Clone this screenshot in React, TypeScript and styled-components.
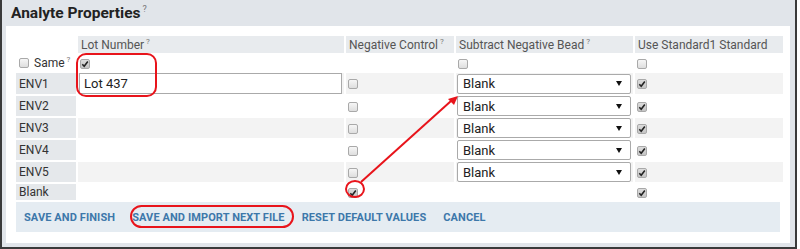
import styled, { createGlobalStyle } from 'styled-components';

const GlobalStyle = createGlobalStyle`
  html, body {
    margin: 0;
    padding: 0;
    background: #fff;
  }
  body {
    font-family: Roboto, "Liberation Sans", Arial, sans-serif;
    font-size: 12px;
    color: #333;
  }
`;

const analytes = ['ENV1', 'ENV2', 'ENV3', 'ENV4', 'ENV5'];

const Frame = styled.div`
  position: relative;
  width: 797px;
  height: 249px;
  box-sizing: border-box;
  border: 2px solid #3a3a3a;
  border-top: none;
  background: #e1e5ea;
  padding: 0 5px 4px 4px;
  display: flex;
  flex-direction: column;
`;

const Header = styled.div`
  height: 26px;
  display: flex;
  align-items: center;
  padding-left: 5px;
`;

const Title = styled.h3`
  margin: 0;
  font-size: 15.5px;
  font-weight: 700;
  color: #222;
  line-height: 1;
`;

const Help = styled.sup<{ $size?: number }>`
  font-size: ${(p) => p.$size ?? 8}px;
  font-weight: 400;
  color: #777;
  margin-left: 2px;
  vertical-align: ${(p) => (p.$size ? '6px' : '5px')};
`;

const Body = styled.div`
  flex: 1;
  background: #fff;
  padding: 8px 8px 11px 8px;
  display: flex;
  flex-direction: column;
`;

const Table = styled.table`
  border-collapse: separate;
  border-spacing: 2px;
  table-layout: fixed;
  width: 771px;
`;

const Row = styled.tr<{ $h: number; $alt?: boolean }>`
  height: ${(p) => p.$h}px;
  background: ${(p) => (p.$alt ? '#f3f3f3' : 'transparent')};
`;

const HeadCell = styled.th<{ $empty?: boolean }>`
  padding: 0 3px;
  text-align: left;
  font-weight: 400;
  color: #555;
  white-space: nowrap;
  background: ${(p) => (p.$empty ? 'transparent' : '#e8ebee')};
`;

const Cell = styled.td`
  padding: 0 3px;
  vertical-align: middle;
  white-space: nowrap;
`;

const LabelCell = styled(Cell)`
  background: #e5e8eb;
  color: #333;
`;

const SameLabel = styled.span`
  display: inline-flex;
  align-items: center;
  gap: 5px;
  margin-left: 1px;
`;

const Box = styled.span<{ $checked?: boolean }>`
  display: inline-flex;
  align-items: center;
  justify-content: center;
  box-sizing: border-box;
  width: 10px;
  height: 10px;
  margin-left: -1px;
  border: 1px solid #a9a9a9;
  border-radius: 2px;
  background: ${(p) =>
    p.$checked ? 'linear-gradient(#dcdcdc, #c4c4c4)' : 'linear-gradient(#f6f6f6, #dedede)'};
  vertical-align: middle;
`;

const TextInput = styled.div`
  box-sizing: border-box;
  width: 263px;
  height: 21px;
  margin-left: -2px;
  border: 1px solid #aaa;
  background: #fff;
  padding: 0 4px;
  display: flex;
  align-items: center;
  font-size: 13px;
  color: #222;
`;

const Select = styled.div`
  box-sizing: border-box;
  width: 174px;
  height: 20px;
  margin-left: -2px;
  border: 1px solid #aaa;
  border-radius: 2px;
  background: #fff;
  padding: 0 8px 0 5px;
  display: flex;
  align-items: center;
  justify-content: space-between;
  font-size: 13px;
  color: #222;
`;

const Caret = styled.span`
  width: 0;
  height: 0;
  border-left: 3px solid transparent;
  border-right: 3px solid transparent;
  border-top: 5px solid #111;
`;

const ButtonBar = styled.div`
  margin: 0 2px;
  height: 30px;
  background: #e5ecf2;
  display: flex;
  align-items: center;
  padding-left: 8px;
  gap: 17px;
`;

const LinkButton = styled.span`
  font-size: 11px;
  font-weight: 700;
  letter-spacing: 0.1px;
  color: #3d78aa;
`;

const Overlay = styled.svg`
  position: absolute;
  top: 0;
  left: 0;
  pointer-events: none;
`;

const Checkbox = ({ checked }: { checked?: boolean }) => (
  <Box $checked={checked}>
    {checked && (
      <svg width="8" height="8" viewBox="0 0 8 8">
        <path d="M1.3 4.3 L3.2 6.2 L6.8 1.6" fill="none" stroke="#222" strokeWidth="1.6" />
      </svg>
    )}
  </Box>
);

const BlankSelect = () => (
  <Select>
    Blank
    <Caret />
  </Select>
);

export default function App() {
  return (
    <>
      <GlobalStyle />
      <Frame>
        <Header>
          <Title>
            Analyte Properties<Help $size={9}>?</Help>
          </Title>
        </Header>
        <Body>
          <Table>
            <colgroup>
              <col style={{ width: 60 }} />
              <col style={{ width: 266 }} />
              <col style={{ width: 108 }} />
              <col style={{ width: 177 }} />
              <col style={{ width: 148 }} />
            </colgroup>
            <thead>
              <Row $h={17}>
                <HeadCell $empty />
                <HeadCell>
                  Lot Number<Help>?</Help>
                </HeadCell>
                <HeadCell>
                  Negative Control<Help>?</Help>
                </HeadCell>
                <HeadCell>
                  Subtract Negative Bead<Help>?</Help>
                </HeadCell>
                <HeadCell>Use Standard1 Standard</HeadCell>
              </Row>
            </thead>
            <tbody>
              <Row $h={16}>
                <Cell>
                  <SameLabel>
                    <Checkbox />
                    <span>
                      Same<Help>?</Help>
                    </span>
                  </SameLabel>
                </Cell>
                <Cell>
                  <Checkbox checked />
                </Cell>
                <Cell />
                <Cell>
                  <Checkbox />
                </Cell>
                <Cell>
                  <Checkbox />
                </Cell>
              </Row>
              {analytes.map((name, i) => (
                <Row key={name} $h={i === 0 ? 21 : 20} $alt={i % 2 === 0}>
                  <LabelCell>{name}</LabelCell>
                  <Cell>{i === 0 && <TextInput>Lot 437</TextInput>}</Cell>
                  <Cell>
                    <Checkbox />
                  </Cell>
                  <Cell>
                    <BlankSelect />
                  </Cell>
                  <Cell>
                    <Checkbox checked />
                  </Cell>
                </Row>
              ))}
              <Row $h={16}>
                <LabelCell>Blank</LabelCell>
                <Cell />
                <Cell>
                  <Checkbox checked />
                </Cell>
                <Cell />
                <Cell>
                  <Checkbox checked />
                </Cell>
              </Row>
            </tbody>
          </Table>
          <ButtonBar>
            <LinkButton>SAVE AND FINISH</LinkButton>
            <LinkButton>SAVE AND IMPORT NEXT FILE</LinkButton>
            <LinkButton>RESET DEFAULT VALUES</LinkButton>
            <LinkButton>CANCEL</LinkButton>
          </ButtonBar>
        </Body>

        {/* red callouts drawn over the form */}
        <Overlay width="800" height="249" viewBox="0 0 800 249">
          <g fill="none" stroke="#e8141b" strokeWidth="2">
            <rect x="75" y="54" width="79" height="42" rx="9" />
            <ellipse cx="353" cy="189" rx="9" ry="8" />
            <line x1="359" y1="182" x2="449" y2="101" />
            <rect x="129" y="206" width="162" height="21" rx="10.5" />
          </g>
          <path d="M456 96 L446 99 L452 105 Z" fill="#e8141b" />
        </Overlay>
      </Frame>
    </>
  );
}
